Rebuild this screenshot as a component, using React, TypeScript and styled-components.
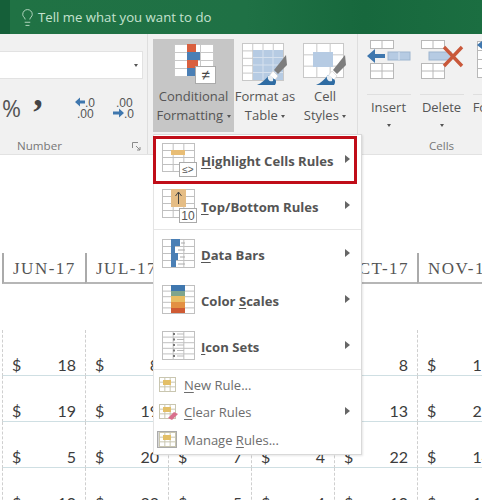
import * as React from 'react'
import styled, { createGlobalStyle } from 'styled-components'
import { Lightbulb } from 'lucide-react'

const GlobalStyle = createGlobalStyle`
  html, body {
    margin: 0;
    padding: 0;
    background: #fff;
  }
`

const Page = styled.div`
  position: relative;
  width: 482px;
  height: 500px;
  overflow: hidden;
  background: #fff;
  font-family: 'Open Sans', 'Liberation Sans', sans-serif;
  color: #555;
`

const TitleBar = styled.div`
  height: 34px;
  padding-left: 10px;
  background: #155f39;
`

const TellMe = styled.div`
  display: flex;
  align-items: center;
  gap: 1px;
  height: 34px;
  padding-left: 8px;
  background: linear-gradient(90deg, #207244, #1f7145 50%, #17683d 75%, #1b6e41);
  color: #c5e2cf;
  font-size: 13.2px;
`

const Ribbon = styled.div`
  display: flex;
  height: 121px;
  overflow: hidden;
  background: #f1f1f1;
  border-bottom: 1px solid #e2e2e2;
  box-sizing: border-box;
`

const Group = styled.div<{ $width: number }>`
  display: flex;
  flex: none;
  flex-direction: column;
  width: ${p => p.$width}px;
  box-sizing: border-box;
  border-right: 1px solid #dedede;
`

const GroupBody = styled.div<{ $left?: number }>`
  display: flex;
  flex: none;
  height: 98px;
  padding: 5px 0 0 ${p => p.$left ?? 0}px;
  box-sizing: border-box;
`

const GroupLabel = styled.div<{ $left?: boolean }>`
  position: relative;
  text-align: ${p => (p.$left ? 'left' : 'center')};
  padding-left: ${p => (p.$left ? 17 : 0)}px;
  font-size: 11.6px;
  line-height: 18px;
  margin-top: 5px;
  color: #777;
`

const NumberBody = styled.div`
  display: flex;
  flex: none;
  flex-direction: column;
  height: 98px;
  padding-top: 17px;
  box-sizing: border-box;
`

const FormatSelect = styled.div`
  display: flex;
  align-items: center;
  justify-content: flex-end;
  width: 143px;
  height: 28px;
  padding-right: 4px;
  box-sizing: border-box;
  background: #fff;
  border: 1px solid #e2e2e2;
  border-left: 0;
`

const Caret = styled.span`
  display: inline-block;
  width: 0;
  height: 0;
  vertical-align: middle;
  border-left: 2.5px solid transparent;
  border-right: 2.5px solid transparent;
  border-top: 3px solid #555;
`

const NumberTools = styled.div`
  display: flex;
  align-items: center;
  height: 30px;
  margin-top: 14px;
`

const Percent = styled.span`
  width: 21px;
  font-size: 23px;
  text-align: right;
  color: #555;
`

const Comma = styled.span`
  width: 30px;
  margin-left: 2px;
  padding-bottom: 30px;
  font-family: 'Liberation Serif', serif;
  font-size: 38px;
  font-weight: bold;
  line-height: 18px;
  text-align: center;
  color: #444;
`

const DecimalTool = styled.span<{ $gap: number }>`
  display: flex;
  width: 25px;
  margin-left: ${p => p.$gap}px;
`

const Launcher = styled.svg`
  position: absolute;
  right: 6px;
  top: 5px;
`

const LargeButton = styled.div<{ $active?: boolean; $width: number }>`
  display: flex;
  flex: none;
  flex-direction: column;
  align-items: center;
  width: ${p => p.$width}px;
  height: 93px;
  padding-top: 4px;
  box-sizing: border-box;
  background: ${p => (p.$active ? '#c6c6c6' : 'transparent')};
`

const IconSlot = styled.div`
  display: flex;
  justify-content: center;
  height: 43px;
`

const ButtonLabel = styled.div`
  font-size: 13px;
  line-height: 19px;
  margin-top: 1px;
  text-align: center;
  white-space: nowrap;
  color: #555;
`

const CellButton = styled.div`
  display: flex;
  flex: none;
  flex-direction: column;
  align-items: center;
  width: 53px;
`

const CellRule = styled.div`
  width: 44px;
  height: 1px;
  margin-top: 12px;
  background: #dfdfdf;
`

const CellLabel = styled.div`
  margin-top: 3px;
  font-size: 13px;
  line-height: 19px;
  white-space: nowrap;
  color: #555;
`

const CellCaret = styled.div`
  margin-top: 7px;
  line-height: 0;
`

const Sheet = styled.div`
  display: grid;
  grid-template-columns: repeat(6, 83px);
  width: 498px;
  margin-left: 2px;
  padding-top: 98px;
`

const HeaderCell = styled.div`
  height: 31px;
  box-sizing: border-box;
  margin-bottom: 46px;
  padding-left: 9px;
  border-left: 2px solid #aaa;
  border-bottom: 2px solid #b6b6b6;
  font-family: 'Liberation Serif', serif;
  font-size: 17px;
  line-height: 31px;
  letter-spacing: 1.5px;
  color: #555;
  white-space: nowrap;
`

const DataCell = styled.div`
  display: flex;
  justify-content: space-between;
  height: 46px;
  box-sizing: border-box;
  padding: 25px 9px 0;
  border-left: 1px dashed #cfcfcf;
  border-bottom: 1px solid #cfdfe3;
  font-family: 'Lato', 'Open Sans', sans-serif;
  font-size: 16px;
  line-height: 20px;
  color: #3c3c3c;
`

const Menu = styled.div`
  position: absolute;
  left: 153px;
  top: 134px;
  width: 209px;
  padding-top: 2px;
  box-sizing: border-box;
  background: #fff;
  border: 1px solid #d9d9d9;
  border-left-color: #e4e4e4;
  box-shadow: 1px 1px 2px rgba(0, 0, 0, 0.1);
`

const MenuItem = styled.div<{ $selected?: boolean; $compact?: boolean }>`
  position: relative;
  display: flex;
  align-items: center;
  height: ${p => (p.$compact ? '27.5px' : '46px')};
  padding-left: ${p => (p.$compact ? '3px' : '7px')};
  box-sizing: border-box;
  ${p => (p.$selected ? 'outline: 3px solid #c00d18; outline-offset: -2px; z-index: 1; margin-right: 5px;' : '')}
`

const MenuIconSlot = styled.div<{ $compact?: boolean }>`
  display: flex;
  flex: none;
  width: ${p => (p.$compact ? '27px' : '40px')};
`

const MenuLabel = styled.div<{ $compact?: boolean }>`
  font-size: ${p => (p.$compact ? '13px' : '13.1px')};
  font-weight: ${p => (p.$compact ? 400 : 700)};
  color: ${p => (p.$compact ? '#6d6d6d' : '#555')};
  padding-top: ${p => (p.$compact ? 0 : 1)}px;
  white-space: nowrap;
  u {
    text-underline-offset: 2px;
  }
`

const SubArrow = styled.span`
  position: absolute;
  left: 191px;
  top: 50%;
  margin-top: -5px;
  width: 0;
  height: 0;
  border-top: 4px solid transparent;
  border-bottom: 4px solid transparent;
  border-left: 5px solid #666;
`

const MenuRule = styled.div`
  height: 1px;
  margin: 0 0 1px 0;
  background: #e6e6e6;
`

const GridLines = ({ x, y, w, h, cols, rows, color = '#aaa' }: { x: number; y: number; w: number; h: number; cols: number; rows: number; color?: string }) => (
  <g stroke={color} strokeWidth="1" fill="none">
    <rect x={x + 0.5} y={y + 0.5} width={w} height={h} fill="#fff" />
    {Array.from({ length: cols - 1 }, (_, i) => (
      <line key={i} x1={x + 0.5 + ((i + 1) * w) / cols} x2={x + 0.5 + ((i + 1) * w) / cols} y1={y} y2={y + h} />
    ))}
    {Array.from({ length: rows - 1 }, (_, i) => (
      <line key={i} y1={y + 0.5 + ((i + 1) * h) / rows} y2={y + 0.5 + ((i + 1) * h) / rows} x1={x} x2={x + w} />
    ))}
  </g>
)

const Brush = ({ x, y }: { x: number; y: number }) => (
  <g transform={`translate(${x} ${y})`}>
    <path d="M21 0 L22 10 L13 19 L9 15 Z" fill="#7d7d7d" />
    <path d="M8 16 L13 21 L10 25 L4 21 Z" fill="#fff" stroke="#ccc" strokeWidth="0.6" />
    <path d="M4 20 C1 24 -3 28 -8 30 L10 30 C12 27 11 24 9 24 Z" fill="#2f6ca3" />
    <path d="M3 21 C5 19 9 22 8 26 C5 27 2 25 3 21 Z" fill="#e8eef3" />
  </g>
)

const ConditionalIcon = () => (
  <svg width="44" height="42" viewBox="0 0 44 42">
    <GridLines x={2} y={1} w={39} h={32} cols={3} rows={4} color="#c8c8c8" />
    <rect x="15" y="1" width="9" height="8" fill="#d9603f" />
    <rect x="15" y="9" width="13" height="8" fill="#4a7fb5" />
    <rect x="15" y="17" width="11" height="8" fill="#d9603f" />
    <rect x="15" y="25" width="8" height="8" fill="#4a7fb5" />
    <rect x="23.5" y="23.5" width="20" height="17" fill="#fff" stroke="#aaa" />
    <text x="33.5" y="37" fontSize="15" textAnchor="middle" fill="#444" fontFamily="Liberation Sans">≠</text>
  </svg>
)

const FormatTableIcon = () => (
  <svg width="46" height="43" viewBox="0 0 46 43">
    <GridLines x={0} y={0} w={41} h={37} cols={4} rows={5} color="#c8c8c8" />
    <rect x="11" y="7" width="30" height="30" fill="#b6cbe3" />
    <path d="M11 14.5H41M11 22H41M11 29.5H41M21 7V37M31 7V37" stroke="#d6e1ee" strokeWidth="1" />
    <Brush x={23} y={12} />
  </svg>
)

const CellStylesIcon = () => (
  <svg width="44" height="43" viewBox="0 0 44 43">
    <GridLines x={0} y={0} w={40} h={34} cols={3} rows={3} color="#c8c8c8" />
    <rect x="10" y="9" width="20" height="15" fill="#b6cbe3" />
    <Brush x={21} y={12} />
  </svg>
)

const InsertIcon = () => (
  <svg width="44" height="42" viewBox="0 0 44 42">
    <GridLines x={3} y={1} w={23} h={8} cols={2} rows={1} color="#b8b8b8" />
    <GridLines x={3} y={24} w={23} h={15} cols={2} rows={2} color="#b8b8b8" />
    <rect x="21" y="13" width="22" height="8" fill="#b6cbe3" stroke="#9eb6d0" />
    <line x1="32" x2="32" y1="13" y2="21" stroke="#dfe8f2" />
    <path d="M0 17 L8 10 V15 H18 V19 H8 V24 Z" fill="#3f77ae" />
  </svg>
)

const DeleteIcon = () => (
  <svg width="46" height="42" viewBox="0 0 46 42">
    <GridLines x={2} y={1} w={23} h={8} cols={2} rows={1} color="#b8b8b8" />
    <GridLines x={2} y={24} w={23} h={15} cols={2} rows={2} color="#b8b8b8" />
    <rect x="10" y="13" width="22" height="8" fill="#b6cbe3" stroke="#9eb6d0" />
    <path d="M25 8 L43 27 M43 8 L25 27" stroke="#c9583a" strokeWidth="3.4" />
  </svg>
)

const FormatCellIcon = () => (
  <svg width="40" height="42" viewBox="0 0 40 42">
    <GridLines x={2} y={2} w={30} h={36} cols={2} rows={4} color="#b8b8b8" />
    <path d="M2 6 L7 2 V10 Z" fill="#3f77ae" />
  </svg>
)

const HighlightIcon = () => (
  <svg width="36" height="36" viewBox="0 0 36 36">
    <GridLines x={1} y={1} w={32} h={28} cols={3} rows={4} color="#c0c0c0" />
    <rect x="10" y="8" width="14" height="5" fill="#e8bd75" />
    <rect x="18.5" y="20.5" width="17" height="14" fill="#fff" stroke="#aaa" />
    <text x="27" y="31" fontSize="10" textAnchor="middle" fill="#555" fontFamily="Liberation Sans">≤&gt;</text>
  </svg>
)

const TopBottomIcon = () => (
  <svg width="36" height="36" viewBox="0 0 36 36">
    <GridLines x={1} y={1} w={32} h={28} cols={3} rows={4} color="#c0c0c0" />
    <rect x="10" y="1" width="15" height="18" fill="#e5bd85" />
    <path d="M17.5 16V4M14.5 8L17.5 4L20.5 8" stroke="#444" fill="none" strokeWidth="1" />
    <rect x="18.5" y="20.5" width="17" height="14" fill="#fff" stroke="#aaa" />
    <text x="27" y="32" fontSize="12" textAnchor="middle" fill="#555" fontFamily="Liberation Sans">10</text>
  </svg>
)

const DataBarsIcon = () => (
  <svg width="36" height="32" viewBox="0 0 36 32">
    <GridLines x={1} y={1} w={32} h={28} cols={3} rows={4} color="#c0c0c0" />
    <rect x="10" y="1" width="9" height="7" fill="#4a7fb5" />
    <rect x="10" y="8" width="4" height="7" fill="#4a7fb5" />
    <rect x="10" y="15" width="7" height="7" fill="#4a7fb5" />
    <rect x="10" y="22" width="5" height="7" fill="#4a7fb5" />
    <path d="M20 5H24M17 12H24M19 19H24M17 26H24" stroke="#aaa" strokeWidth="1" />
  </svg>
)

const ColorScalesIcon = () => (
  <svg width="36" height="32" viewBox="0 0 36 32">
    <GridLines x={1} y={1} w={32} h={28} cols={3} rows={5} color="#c0c0c0" />
    <rect x="10" y="1" width="14" height="6" fill="#3f77ae" />
    <rect x="10" y="7" width="14" height="5" fill="#7fa58c" />
    <rect x="10" y="12" width="14" height="6" fill="#e8bd62" />
    <rect x="10" y="18" width="14" height="6" fill="#e39043" />
    <rect x="10" y="24" width="14" height="5" fill="#cf5a33" />
  </svg>
)

const IconSetsIcon = () => (
  <svg width="36" height="32" viewBox="0 0 36 32">
    <GridLines x={1} y={1} w={32} h={28} cols={3} rows={5} color="#c0c0c0" />
    {[4, 9.5, 15, 20.5, 26].map(y => (
      <g key={y}>
        <rect x="12" y={y - 1} width="2" height="2" fill="#777" />
        <line x1="16" x2="23" y1={y} y2={y} stroke="#bbb" />
      </g>
    ))}
  </svg>
)

const SmallRuleIcon = ({ variant }: { variant: 'new' | 'clear' | 'manage' }) => (
  <svg width="21" height="18" viewBox="0 0 21 18">
    {variant === 'manage' && <rect x="0.5" y="0.5" width="19" height="16" fill="#d8d8d8" stroke="#aaa" />}
    <GridLines x={2} y={1} w={16} h={14} cols={3} rows={3} color="#c9c6b0" />
    <rect x="6" y="4" width="8" height="5" fill="#e3bf67" />
    {variant === 'clear' && <path d="M11 15 L17 9 L21 11 L15 17 Z" fill="#d9708c" />}
  </svg>
)

const months = ['JUN-17', 'JUL-17', 'AUG-17', 'SEP-17', 'OCT-17', 'NOV-17']

const rows = [
  [18, 8, 12, 6, 8, 15],
  [19, 19, 3, 9, 13, 21],
  [5, 20, 7, 4, 22, 14],
  [10, 22, 5, 4, 10, 11],
]

const SheetGrid = () => (
  <Sheet>
    {months.map(m => (
      <HeaderCell key={m}>{m}</HeaderCell>
    ))}
    {rows.map((row, r) =>
      row.map((value, c) => (
        <DataCell key={`${r}-${c}`}>
          <span>$</span>
          <span>{value}</span>
        </DataCell>
      ))
    )}
  </Sheet>
)

const ConditionalMenu = () => (
  <Menu>
    <MenuItem $selected>
      <MenuIconSlot><HighlightIcon /></MenuIconSlot>
      <MenuLabel><u>H</u>ighlight Cells Rules</MenuLabel>
      <SubArrow />
    </MenuItem>
    <MenuItem>
      <MenuIconSlot><TopBottomIcon /></MenuIconSlot>
      <MenuLabel><u>T</u>op/Bottom Rules</MenuLabel>
      <SubArrow />
    </MenuItem>
    <MenuRule />
    <MenuItem>
      <MenuIconSlot><DataBarsIcon /></MenuIconSlot>
      <MenuLabel><u>D</u>ata Bars</MenuLabel>
      <SubArrow />
    </MenuItem>
    <MenuItem>
      <MenuIconSlot><ColorScalesIcon /></MenuIconSlot>
      <MenuLabel>Color <u>S</u>cales</MenuLabel>
      <SubArrow />
    </MenuItem>
    <MenuItem>
      <MenuIconSlot><IconSetsIcon /></MenuIconSlot>
      <MenuLabel><u>I</u>con Sets</MenuLabel>
      <SubArrow />
    </MenuItem>
    <MenuRule />
    <MenuItem $compact>
      <MenuIconSlot $compact><SmallRuleIcon variant="new" /></MenuIconSlot>
      <MenuLabel $compact><u>N</u>ew Rule...</MenuLabel>
    </MenuItem>
    <MenuItem $compact>
      <MenuIconSlot $compact><SmallRuleIcon variant="clear" /></MenuIconSlot>
      <MenuLabel $compact><u>C</u>lear Rules</MenuLabel>
      <SubArrow />
    </MenuItem>
    <MenuItem $compact>
      <MenuIconSlot $compact><SmallRuleIcon variant="manage" /></MenuIconSlot>
      <MenuLabel $compact>Manage <u>R</u>ules...</MenuLabel>
    </MenuItem>
  </Menu>
)

const App = () => (
  <Page>
    <GlobalStyle />
    <TitleBar>
      <TellMe>
        <Lightbulb size={19} strokeWidth={1.1} color="#c5e2cf" />
        Tell me what you want to do
      </TellMe>
    </TitleBar>
    <Ribbon>
      <Group $width={148}>
        <NumberBody>
          <FormatSelect><Caret /></FormatSelect>
          <NumberTools>
            <Percent>%</Percent>
            <Comma>,</Comma>
            <DecimalTool $gap={22}>
              <svg width="25" height="24" viewBox="0 0 25 24">
                <path d="M0 6L5 1.5V4.5H10V7.5H5V10.5Z" fill="#3f77ae" />
                <text x="10" y="11" fontSize="12" fill="#555" fontFamily="Liberation Sans">.0</text>
                <text x="2" y="22" fontSize="12" fill="#555" fontFamily="Liberation Sans">.00</text>
              </svg>
            </DecimalTool>
            <DecimalTool $gap={13}>
              <svg width="25" height="24" viewBox="0 0 25 24">
                <text x="3" y="11" fontSize="12" fill="#555" fontFamily="Liberation Sans">.00</text>
                <path d="M11 17L6 12.5V15.5H0V18.5H6V21.5Z" fill="#3f77ae" />
                <text x="11" y="22" fontSize="12" fill="#555" fontFamily="Liberation Sans">.0</text>
              </svg>
            </DecimalTool>
          </NumberTools>
        </NumberBody>
        <GroupLabel $left>
          Number
          <Launcher width="9" height="9" viewBox="0 0 9 9">
            <path d="M0.5 6V0.5H6M4 4L8 8M8 5V8H5" stroke="#8a8a8a" fill="none" />
          </Launcher>
        </GroupLabel>
      </Group>
      <Group $width={210}>
        <GroupBody $left={5}>
          <LargeButton $active $width={81}>
            <IconSlot><ConditionalIcon /></IconSlot>
            <ButtonLabel>Conditional<br />Formatting <Caret /></ButtonLabel>
          </LargeButton>
          <LargeButton $width={62}>
            <IconSlot><FormatTableIcon /></IconSlot>
            <ButtonLabel>Format as<br />Table <Caret /></ButtonLabel>
          </LargeButton>
          <LargeButton $width={58}>
            <IconSlot><CellStylesIcon /></IconSlot>
            <ButtonLabel>Cell<br />Styles <Caret /></ButtonLabel>
          </LargeButton>
        </GroupBody>
      </Group>
      <Group $width={168}>
        <GroupBody $left={4}>
          <CellButton>
            <IconSlot><InsertIcon /></IconSlot>
            <CellRule />
            <CellLabel>Insert</CellLabel>
            <CellCaret><Caret /></CellCaret>
          </CellButton>
          <CellButton>
            <IconSlot><DeleteIcon /></IconSlot>
            <CellRule />
            <CellLabel>Delete</CellLabel>
            <CellCaret><Caret /></CellCaret>
          </CellButton>
          <CellButton>
            <IconSlot><FormatCellIcon /></IconSlot>
            <CellRule />
            <CellLabel>Format</CellLabel>
            <CellCaret><Caret /></CellCaret>
          </CellButton>
        </GroupBody>
        <GroupLabel>Cells</GroupLabel>
      </Group>
    </Ribbon>
    <SheetGrid />
    <ConditionalMenu />
  </Page>
)

export default App
